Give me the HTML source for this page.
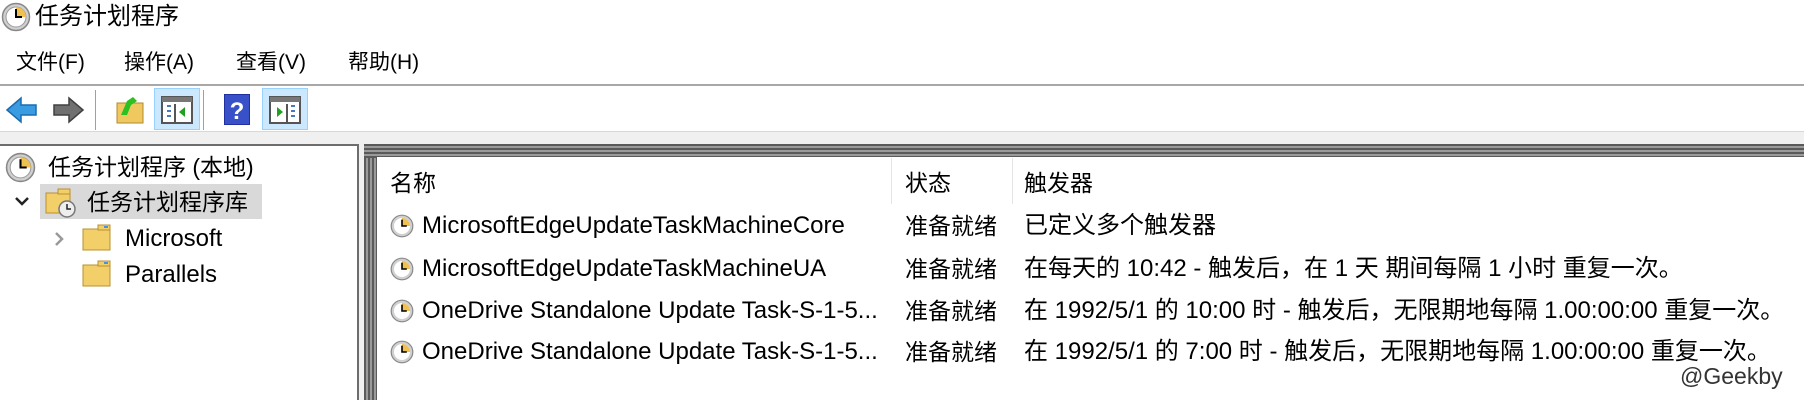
<!DOCTYPE html>
<html><head><meta charset="utf-8"><style>
*{margin:0;padding:0;box-sizing:border-box}
body{width:1804px;height:400px;overflow:hidden;background:#fff;position:relative;font-family:"Liberation Sans","Noto Sans CJK SC",sans-serif;color:#000}
.a{position:absolute;white-space:nowrap}
.t{font-size:24px;line-height:26px}
</style></head><body>
<!-- title -->
<svg class="a" style="left:1px;top:2px" width="30" height="30" viewBox="0 0 30 30"><circle cx="15" cy="15" r="13.5" fill="#d0d0d0" stroke="#888" stroke-width="1.5"/><circle cx="15" cy="15" r="10" fill="#fff" stroke="#999"/><path d="M15 5 A10 10 0 0 1 25 15 L15 15Z" fill="#f0c050"/><path d="M15 7v8h6" stroke="#000" stroke-width="2" fill="none"/></svg>
<div class="a" style="left:35px;top:2px;font-size:24px;line-height:30px">任务计划程序</div>
<!-- menu -->
<div class="a" style="left:16px;top:50px;font-size:21px;line-height:26px">文件(F)</div>
<div class="a" style="left:124px;top:50px;font-size:21px;line-height:26px">操作(A)</div>
<div class="a" style="left:236px;top:50px;font-size:21px;line-height:26px">查看(V)</div>
<div class="a" style="left:348px;top:50px;font-size:21px;line-height:26px">帮助(H)</div>
<div class="a" style="left:0;top:84px;width:1804px;height:2px;background:#a8a8a8"></div>
<!-- toolbar -->
<svg class="a" style="left:5px;top:95px" width="34" height="30" viewBox="0 0 34 30"><path d="M2 15 L16 3 V10 H31 V20 H16 V27Z" fill="#3a9be0" stroke="#1a6cb0" stroke-width="1.5"/></svg>
<svg class="a" style="left:51px;top:95px" width="34" height="30" viewBox="0 0 34 30"><path d="M32 15 L18 3 V10 H3 V20 H18 V27Z" fill="#707070" stroke="#404040" stroke-width="1.5"/></svg>
<div class="a" style="left:95px;top:90px;width:1px;height:40px;background:#a0a0a0"></div>
<svg class="a" style="left:115px;top:93px" width="30" height="32" viewBox="0 0 30 32"><rect x="2" y="10" width="26" height="20" fill="#f0c860" stroke="#b08a30"/><path d="M6 22 L12 8 L18 4 L22 8 L16 12 L12 22Z" fill="#2cc020"/></svg>
<div class="a" style="left:154px;top:88px;width:46px;height:42px;background:#cce8ff;border:1px solid #99d1ff"></div>
<svg class="a" style="left:161px;top:96px" width="32" height="28" viewBox="0 0 32 28"><rect x="1" y="1" width="30" height="26" fill="#fff" stroke="#555" stroke-width="2"/><rect x="1" y="1" width="30" height="5" fill="#777"/><path d="M6 10h4M6 15h4M6 20h4" stroke="#4a78c0" stroke-width="2"/><path d="M14 8v18" stroke="#555" stroke-width="2"/><path d="M24 11v10l-6-5z" fill="#20a020"/></svg>
<div class="a" style="left:203px;top:90px;width:1px;height:40px;background:#a0a0a0"></div>
<svg class="a" style="left:224px;top:94px" width="26" height="31" viewBox="0 0 26 31"><rect x="0" y="0" width="26" height="31" fill="#2030a0"/><rect x="1" y="1" width="24" height="29" fill="#3850c8"/><text x="13" y="25" text-anchor="middle" font-family="Liberation Sans" font-weight="bold" font-size="24" fill="#fff">?</text></svg>
<div class="a" style="left:262px;top:88px;width:46px;height:42px;background:#cce8ff;border:1px solid #99d1ff"></div>
<svg class="a" style="left:269px;top:96px" width="32" height="28" viewBox="0 0 32 28"><rect x="1" y="1" width="30" height="26" fill="#fff" stroke="#555" stroke-width="2"/><rect x="1" y="1" width="30" height="5" fill="#777"/><path d="M22 10h4M22 15h4M22 20h4" stroke="#4a78c0" stroke-width="2"/><path d="M18 8v18" stroke="#555" stroke-width="2"/><path d="M8 11v10l6-5z" fill="#20a020"/></svg>
<div class="a" style="left:0;top:131px;width:1804px;height:14px;background:#f0f0f0;border-top:1px solid #d8d8d8"></div>
<!-- left pane -->
<div class="a" style="left:0;top:144px;width:359px;height:256px;background:#fff;border-top:2px solid #6d6d6d;border-right:2px solid #6d6d6d"></div>
<div class="a" style="left:359px;top:144px;width:5px;height:256px;background:#f0f0f0"></div>
<svg class="a" style="left:5px;top:152px" width="31" height="31" viewBox="0 0 30 30"><circle cx="15" cy="15" r="13.5" fill="#d0d0d0" stroke="#888" stroke-width="1.5"/><circle cx="15" cy="15" r="10" fill="#fff" stroke="#999"/><path d="M15 5 A10 10 0 0 1 25 15 L15 15Z" fill="#f0c050"/><path d="M15 7v8h6" stroke="#000" stroke-width="2" fill="none"/></svg>
<div class="a t" style="left:48px;top:154px;font-size:23px">任务计划程序 (本地)</div>
<div class="a" style="left:40px;top:184px;width:222px;height:35px;background:#d9d9d9"></div>
<svg class="a" style="left:13px;top:194px" width="18" height="14" viewBox="0 0 18 14"><path d="M3 4l6 6 6-6" stroke="#222" stroke-width="2.5" fill="none"/></svg>
<svg class="a" style="left:44px;top:186px" width="34" height="32" viewBox="0 0 34 32"><rect x="2" y="7" width="24" height="20" fill="#f3cf6a" stroke="#b8902e"/><rect x="14" y="3" width="12" height="5" fill="#f3cf6a" stroke="#b8902e"/><circle cx="23" cy="23" r="8" fill="#eee" stroke="#777" stroke-width="1.5"/><path d="M23 18v5h4" stroke="#222" stroke-width="1.5" fill="none"/></svg>
<div class="a t" style="left:87px;top:189px;font-size:23px">任务计划程序库</div>
<svg class="a" style="left:53px;top:231px" width="12" height="16" viewBox="0 0 12 16"><path d="M3 2l6 6-6 6" stroke="#999" stroke-width="2.5" fill="none"/></svg>
<svg class="a" style="left:82px;top:224px" width="30" height="28" viewBox="0 0 30 28"><rect x="1" y="5" width="27" height="21" fill="#f3cf6a" stroke="#b8902e"/><rect x="16" y="1" width="12" height="5" fill="#f3cf6a" stroke="#b8902e"/><rect x="22" y="2" width="4" height="2" fill="#4a90e0"/></svg>
<div class="a t" style="left:125px;top:226px">Microsoft</div>
<svg class="a" style="left:82px;top:260px" width="30" height="28" viewBox="0 0 30 28"><rect x="1" y="5" width="27" height="21" fill="#f3cf6a" stroke="#b8902e"/><rect x="16" y="1" width="12" height="5" fill="#f3cf6a" stroke="#b8902e"/><rect x="22" y="2" width="4" height="2" fill="#4a90e0"/></svg>
<div class="a t" style="left:125px;top:262px">Parallels</div>
<!-- right pane frame -->
<div class="a" style="left:364px;top:144px;width:1440px;height:256px;background:repeating-linear-gradient(90deg,#5a5a5a 0 2px,#9a9a9a 2px 4px)"></div>
<div class="a" style="left:364px;top:144px;width:1440px;height:14px;background:repeating-linear-gradient(180deg,#5a5a5a 0 2px,#9a9a9a 2px 4px)"></div>
<div class="a" style="left:377px;top:157px;width:1427px;height:243px;background:#fff"></div>
<div class="a" style="left:891px;top:158px;width:1px;height:46px;background:#e5e5e5"></div>
<div class="a" style="left:1012px;top:158px;width:1px;height:46px;background:#e5e5e5"></div>
<div class="a t" style="left:390px;top:170px;font-size:23px">名称</div>
<div class="a t" style="left:905px;top:170px;font-size:23px">状态</div>
<div class="a t" style="left:1024px;top:170px;font-size:23px">触发器</div>

<svg class="a" style="left:390px;top:214px" width="24" height="24" viewBox="0 0 30 30"><circle cx="15" cy="15" r="13.5" fill="#d0d0d0" stroke="#888" stroke-width="1.5"/><circle cx="15" cy="15" r="10" fill="#fff"/><path d="M15 5 A10 10 0 0 1 25 15 L15 15Z" fill="#f0c050"/><path d="M15 7v8h6" stroke="#000" stroke-width="2" fill="none"/></svg>
<div class="a t" style="left:422px;top:213px">MicrosoftEdgeUpdateTaskMachineCore</div>
<div class="a t" style="left:905px;top:213px;font-size:23px">准备就绪</div>
<div class="a t" style="left:1024px;top:213px">已定义多个触发器</div>

<svg class="a" style="left:390px;top:257px" width="24" height="24" viewBox="0 0 30 30"><circle cx="15" cy="15" r="13.5" fill="#d0d0d0" stroke="#888" stroke-width="1.5"/><circle cx="15" cy="15" r="10" fill="#fff"/><path d="M15 5 A10 10 0 0 1 25 15 L15 15Z" fill="#f0c050"/><path d="M15 7v8h6" stroke="#000" stroke-width="2" fill="none"/></svg>
<div class="a t" style="left:422px;top:256px">MicrosoftEdgeUpdateTaskMachineUA</div>
<div class="a t" style="left:905px;top:256px;font-size:23px">准备就绪</div>
<div class="a t" style="left:1024px;top:256px">在每天的 10:42 - 触发后，在 1 天 期间每隔 1 小时 重复一次。</div>

<svg class="a" style="left:390px;top:299px" width="24" height="24" viewBox="0 0 30 30"><circle cx="15" cy="15" r="13.5" fill="#d0d0d0" stroke="#888" stroke-width="1.5"/><circle cx="15" cy="15" r="10" fill="#fff"/><path d="M15 5 A10 10 0 0 1 25 15 L15 15Z" fill="#f0c050"/><path d="M15 7v8h6" stroke="#000" stroke-width="2" fill="none"/></svg>
<div class="a t" style="left:422px;top:298px">OneDrive Standalone Update Task-S-1-5...</div>
<div class="a t" style="left:905px;top:298px;font-size:23px">准备就绪</div>
<div class="a t" style="left:1024px;top:298px">在 1992/5/1 的 10:00 时 - 触发后，无限期地每隔 1.00:00:00 重复一次。</div>

<svg class="a" style="left:390px;top:340px" width="24" height="24" viewBox="0 0 30 30"><circle cx="15" cy="15" r="13.5" fill="#d0d0d0" stroke="#888" stroke-width="1.5"/><circle cx="15" cy="15" r="10" fill="#fff"/><path d="M15 5 A10 10 0 0 1 25 15 L15 15Z" fill="#f0c050"/><path d="M15 7v8h6" stroke="#000" stroke-width="2" fill="none"/></svg>
<div class="a t" style="left:422px;top:339px">OneDrive Standalone Update Task-S-1-5...</div>
<div class="a t" style="left:905px;top:339px;font-size:23px">准备就绪</div>
<div class="a t" style="left:1024px;top:339px">在 1992/5/1 的 7:00 时 - 触发后，无限期地每隔 1.00:00:00 重复一次。</div>

<div class="a" style="left:1680px;top:362px;font-size:23px;line-height:28px;color:#333">@Geekby</div>
</body></html>
